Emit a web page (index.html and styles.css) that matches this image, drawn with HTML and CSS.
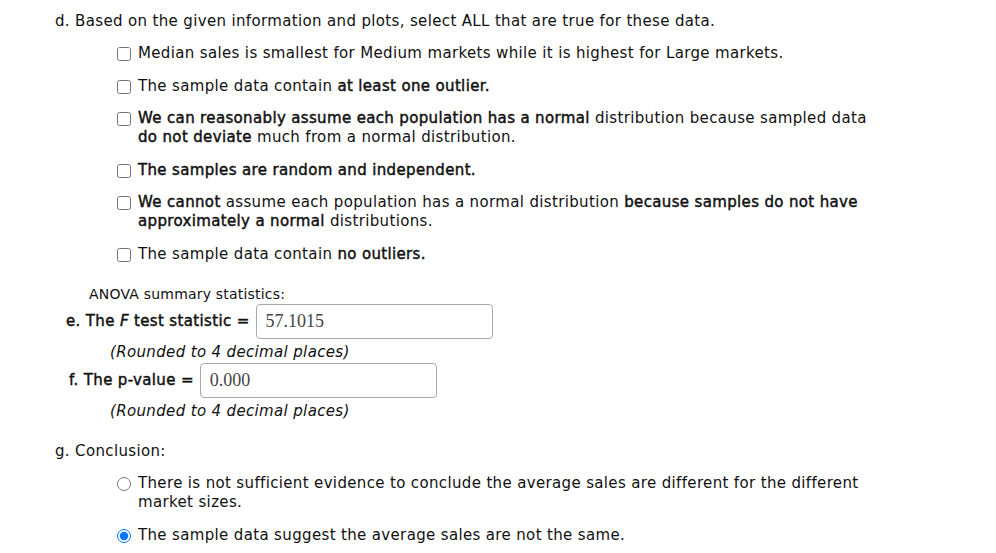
FILE: index.html
```html
<!DOCTYPE html>
<html lang="en">
<head>
<meta charset="UTF-8">
<title>ANOVA question</title>
<link rel="stylesheet" href="styles.css">
</head>
<body>
<div class="part">
  <p class="q">d. Based on the given information and plots, select ALL that are true for these data.</p>
  <ul class="choices">
    <li><label><input type="checkbox"><span>Median sales is smallest for Medium markets while it is highest for Large markets.</span></label></li>
    <li><label><input type="checkbox"><span>The sample data contain <b>at least one outlier.</b></span></label></li>
    <li><label><input type="checkbox"><span><b>We can reasonably assume each population has a normal</b> distribution because sampled data <b>do not deviate</b> much from a normal distribution.</span></label></li>
    <li><label><input type="checkbox"><span><b>The samples are random and independent.</b></span></label></li>
    <li><label><input type="checkbox"><span><b>We cannot</b> assume each population has a normal distribution <b>because samples do not have approximately a normal</b> distributions.</span></label></li>
    <li><label><input type="checkbox"><span>The sample data contain <b>no outliers.</b></span></label></li>
  </ul>
</div>

<div class="stats">
  <p class="sub">ANOVA summary statistics:</p>
  <div class="field f-e">
    <span class="lbl">e. The <i>F</i> test statistic =</span>
    <div class="box">57.1015</div>
  </div>
  <p class="note">(Rounded to 4 decimal places)</p>
  <div class="field f-f">
    <span class="lbl">f. The p-value =</span>
    <div class="box">0.000</div>
  </div>
  <p class="note">(Rounded to 4 decimal places)</p>
</div>

<div class="part concl">
  <p class="q">g. Conclusion:</p>
  <ul class="choices">
    <li><label><input type="radio" name="concl"><span>There is not sufficient evidence to conclude the average sales are different for the different market sizes.</span></label></li>
    <li><label><input type="radio" name="concl" checked><span>The sample data suggest the average sales are not the same.</span></label></li>
  </ul>
</div>
</body>
</html>
```

FILE: styles.css
```css
body {margin:0;padding:11px 0 0 55px;background:#fff;color:#111;font-family:'DejaVu Sans',sans-serif;font-size:15px;line-height:20px;letter-spacing:0.35px;}
p {margin:0;}
b {font-weight:normal;-webkit-text-stroke:0.45px currentColor;}
.q {margin-bottom:13px;}
.choices {list-style:none;margin:0;padding:0 0 0 62px;width:752px;line-height:19px;}
.choices li {margin-bottom:13.5px;}
.choices label {display:flex;align-items:flex-start;}
.choices input {margin:3px 7px 0 0;width:14px;height:14px;flex:none;}
.stats {padding-top:6.5px;}
.sub {padding-left:34px;font-size:14px;letter-spacing:0.2px;}
.field {display:flex;align-items:center;gap:6px;-webkit-text-stroke:0.45px currentColor;}
.f-e {padding-left:11px;}
.f-f {padding-left:14px;margin-top:1px;}
.box {width:226px;height:33px;border:1px solid #aaa;border-radius:4px;padding-left:9px;font-family:'Liberation Serif',serif;font-size:18px;letter-spacing:0;line-height:33px;color:#444;-webkit-text-stroke:0;}
.note {padding-left:55px;font-style:italic;margin-top:3px;}
.concl {margin-top:20.5px;}
```
